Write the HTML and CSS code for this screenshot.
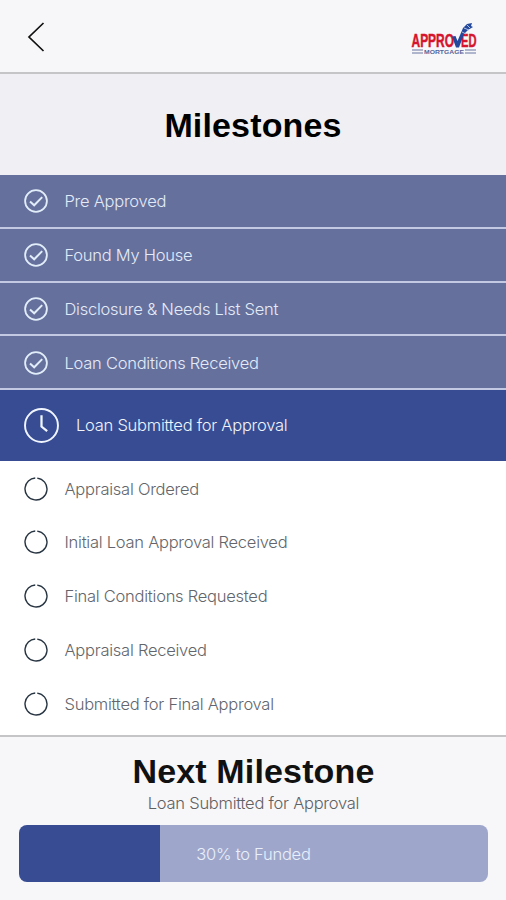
FILE: index.html
```html
<!DOCTYPE html>
<html lang="en">
<head>
    <meta charset="UTF-8">
    <meta name="viewport" content="width=device-width, initial-scale=1.0">
    <title>Milestones</title>
    <link rel="stylesheet" href="styles.css">
</head>
<body>
    <svg class="sprite" aria-hidden="true">
        <symbol id="check" viewBox="0 0 24 24">
            <circle cx="12" cy="12" r="10.9" fill="none" stroke="currentColor" stroke-width="1.8"/>
            <path d="M6 12.400l4.200 3.900 8-8.200" fill="none" stroke="currentColor" stroke-width="2"/>
        </symbol>
        <symbol id="circle" viewBox="0 0 24 24">
            <circle cx="12" cy="12" r="11" fill="none" stroke="currentColor" stroke-width="1.400" stroke-dasharray="66.600 2.500" transform="rotate(-83.500 12 12)"/>
        </symbol>
    </svg>

    <header class="navbar">
        <svg class="back" viewBox="0 0 18 30">
            <path d="M16.5 1L2 15l14.500 14" fill="none" stroke="#111" stroke-width="1.7"/>
        </svg>
        <svg class="logo" viewBox="0 0 68 32">
            <g class="logo-name">
                <text x="0.500" y="25" textLength="42.500" lengthAdjust="spacingAndGlyphs">APPRO</text>
                <text x="50" y="25" textLength="15.500" lengthAdjust="spacingAndGlyphs">ED</text>
            </g>
            <path d="M41 14.500l3.500-.5 2 5L52 6l4-4 5-1-1 3 2 1-5 3-4 4-5 13.500h-3z" fill="#24489c"/>
            <path d="M53 6l5 2M51 10l4 2M56 3l3 3" stroke="#aebfe2" stroke-width="1"/>
            <path d="M1 28h11M1 31h11M54 28h11M54 31h11" stroke="#68749f" stroke-width="1"/>
            <text class="logo-sub" x="13" y="31.500" textLength="40" lengthAdjust="spacingAndGlyphs">MORTGAGE</text>
        </svg>
    </header>

    <h1 class="title">Milestones</h1>

    <ul class="milestones">
        <li class="done"><svg class="icon"><use href="#check"/></svg>Pre Approved</li>
        <li class="done"><svg class="icon"><use href="#check"/></svg>Found My House</li>
        <li class="done"><svg class="icon"><use href="#check"/></svg>Disclosure &amp; Needs List Sent</li>
        <li class="done"><svg class="icon"><use href="#check"/></svg>Loan Conditions Received</li>
        <li class="current">
            <svg class="icon" viewBox="0 0 34 34">
                <circle cx="17" cy="17" r="16" fill="none" stroke="currentColor" stroke-width="1.900"/>
                <path d="M17 7v11l5.500 4.500" fill="none" stroke="currentColor" stroke-width="2.200"/>
            </svg>
            Loan Submitted for Approval
        </li>
        <li><svg class="icon"><use href="#circle"/></svg>Appraisal Ordered</li>
        <li><svg class="icon"><use href="#circle"/></svg>Initial Loan Approval Received</li>
        <li><svg class="icon"><use href="#circle"/></svg>Final Conditions Requested</li>
        <li><svg class="icon"><use href="#circle"/></svg>Appraisal Received</li>
        <li><svg class="icon"><use href="#circle"/></svg>Submitted for Final Approval</li>
    </ul>

    <footer class="next">
        <h2>Next Milestone</h2>
        <p>Loan Submitted for Approval</p>
        <div class="progress">30% to Funded</div>
    </footer>
</body>
</html>
```
FILE: styles.css
```css
* {
    box-sizing: border-box;
}
body {
    margin: 0;
    height: 900px;
    display: flex;
    flex-direction: column;
    overflow: hidden;
    background-color: #fff;
    font-family: Inter, "Liberation Sans", sans-serif;
    font-size: 16.5px;
    font-weight: 300;
    letter-spacing: -0.25px;
}
.sprite {
    display: none;
}
.navbar {
    height: 74px;
    padding: 0 28px 0 27px;
    display: flex;
    justify-content: space-between;
    background-color: #f7f7f9;
    border-bottom: 2px solid #c5c5c8;
}
.back {
    width: 18px;
    height: 30px;
    margin-top: 22px;
}
.logo {
    width: 68px;
    height: 32px;
    margin: 22px -1px 0 0;
    overflow: visible;
}
.logo-name {
    font: bold 18px "Liberation Sans", sans-serif;
    letter-spacing: 0;
    fill: #d5142d;
    stroke: #d5142d;
    stroke-width: 0.5px;
}
.logo-sub {
    font: bold 5.5px "Liberation Sans", sans-serif;
    letter-spacing: 0;
    fill: #53649b;
}
.title, .next h2 {
    margin: 0;
    font: bold 34px "Liberation Sans", sans-serif;
    letter-spacing: 0.15px;
    text-align: center;
    color: #000;
}
.title {
    height: 101px;
    line-height: 102px;
    background-color: #efeff4;
}
.milestones {
    list-style: none;
    margin: 0;
    padding: 0;
    height: 560px;
}
.milestones li {
    height: 53.800px;
    padding-left: 24px;
    display: flex;
    align-items: center;
    gap: 16.500px;
    color: #62666c;
}
.milestones .icon {
    width: 24px;
    height: 24px;
    color: #263340;
}
.milestones .done {
    padding-top: 1px;
    color: #e4ebf8;
    background-color: #65709d;
    border-bottom: 2px solid #c3c9e2;
}
.milestones .done .icon {
    color: #e1edf8;
}
.milestones .current {
    height: 70.500px;
    margin-bottom: 1px;
    gap: 17px;
    color: #f0f4fd;
    background-color: #374c92;
}
.milestones .current .icon {
    width: 35px;
    height: 35px;
    color: #f0f5ff;
}
.next {
    flex: 1;
    padding: 15px 18px 0 19px;
    text-align: center;
    background-color: #f7f7f9;
    border-top: 2px solid #c5c5c8;
}
.next h2 {
    line-height: 38px;
    color: #111;
}
.next p {
    margin: 2px 0 11px;
    line-height: 22px;
    color: #606063;
}
.progress {
    height: 57px;
    line-height: 59px;
    border-radius: 8px;
    color: #e9effb;
    background: linear-gradient(to right, #374c92 30%, #9ea7cb 30%);
}
```
